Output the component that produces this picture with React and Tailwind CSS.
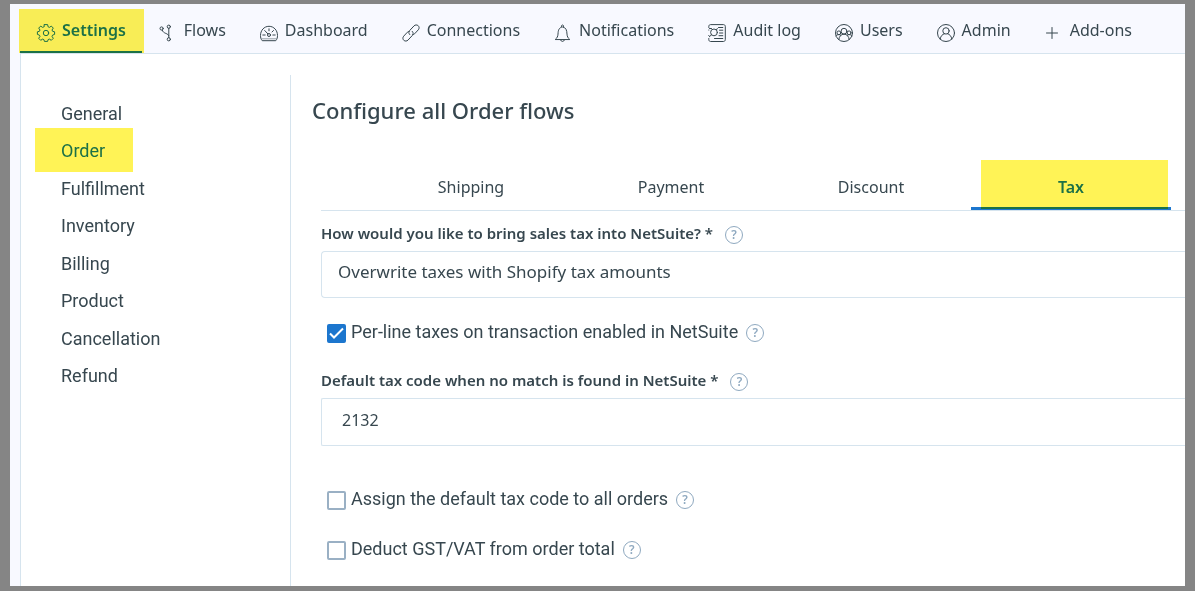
import { useState } from "react";

const Icon = ({ children }) => (
    <svg
        viewBox="0 0 18 18"
        className="w-[18px] h-[18px] shrink-0 overflow-visible"
        fill="none"
        stroke="currentColor"
        strokeWidth="1"
        strokeLinecap="round"
        strokeLinejoin="round"
        aria-hidden="true"
    >
        {children}
    </svg>
);

const GearIcon = () => (
    <Icon>
        <circle cx="9" cy="9" r="2.7" />
        <path d="M7.4 0.6h3.2l.5 2.2 1.3.6 1.9-1.3 2 2-1.3 1.9.6 1.3 2 .5v2.6l-2 .7-.6 1.3 1.3 1.9-2 2-1.9-1.2-1.3.5-.5 1.8H7.4l-.5-1.8-1.3-.5-1.9 1.2-2-2L3 12.4l-.6-1.3-2-.7V7.8l2-.5L3 6 1.7 4.1l2-2 1.9 1.3 1.3-.6z" />
    </Icon>
);

const FlowsIcon = () => (
    <Icon>
        <circle cx="2.6" cy="4.5" r="1.6" />
        <circle cx="9.8" cy="2.7" r="1.6" />
        <circle cx="9.8" cy="15.3" r="1.6" />
        <path d="M9.8 4.3v9.4M3.200 6.100c.6 2 2 2.600 3.600 3.300 1.500.6 2.600 1.200 3 2.300" />
    </Icon>
);

const DashboardIcon = () => (
    <Icon>
        <path d="M2 16.4C.8 15 .5 13.500.5 11.500.5 6.500 4 2.300 9 2.300s8.500 4.200 8.500 9.200c0 2-.3 3.500-1.500 4.900z" />
        <circle cx="9" cy="11" r="1.5" />
        <path d="M9 4.8v2M2.8 11h2.400M12.800 11h2.400M4.700 6.500l3.200 3.400M12 8l1.500-1.500" />
        <path d="M2 14.8h14" strokeWidth=".5" />
    </Icon>
);

const LinkIcon = () => (
    <Icon>
        <path d="M7.7 10.6c-1.200-1.200-1.200-2.900 0-4.100l4.300-4.600c1.200-1.200 2.900-1.300 4.200-.2 1.200 1.200 1.200 2.900.1 4.100l-3.700 4c-.6.6-1.200.9-2 .9" />
        <path d="M10.3 7.4c1.200 1.200 1.200 2.900 0 4.100L6 16.100c-1.200 1.200-2.900 1.300-4.200.2-1.200-1.200-1.200-2.900-.1-4.100l3.700-4c.6-.6 1.200-.9 2-.9" />
    </Icon>
);

const BellIcon = () => (
    <Icon>
        <path d="M1.5 15.3c1.700-1.500 2.300-2.700 2.500-5.200.2-4 1-6.600 4.500-7.100 3.500.5 4.300 3.100 4.500 7.100.2 2.500.8 3.700 2.500 5.200z" />
        <path d="M7.4 2.6c-.2-2.400 2.400-2.400 2.200 0M6.700 16.300c.5 1.600 3.100 1.600 3.600 0" />
    </Icon>
);

const AuditIcon = () => (
    <Icon>
        <path d="M.8 3.5V2.400C.8 1.300 1.500.6 2.600.6h12.800c1.100 0 1.900.7 1.900 1.800v13.200c0 1.100-.8 1.900-1.900 1.900H2.600c-1.100 0-1.800-.8-1.800-1.900v-1.100M.8 6v.1M.8 11.400v.1" />
        <circle cx="6" cy="8.4" r="3.4" />
        <path d="M3.5 10.8l-2.200 2M10.500 3.500h4.300M11.500 6.200h3.300M11.500 9h3.300M11 11.700h3.800M6.500 14.500h8.300M1.500 4.500h2M8.500 5.800l.8-1.300" />
    </Icon>
);

const UsersIcon = () => (
    <Icon>
        <circle cx="9" cy="9" r="8.5" />
        <circle cx="9" cy="7.2" r="2.9" />
        <circle cx="3.9" cy="8.8" r="1.9" />
        <circle cx="14.1" cy="8.8" r="1.9" />
        <path d="M3.8 15.500c.4-3.300 2.400-5.300 5.200-5.300s4.800 2 5.200 5.300M1 11.800c.8-.8 1.700-1.200 2.900-1.200.8 0 1.400.2 1.900.7M17 11.800c-.8-.8-1.700-1.200-2.900-1.200-.8 0-1.400.2-1.900.7" />
    </Icon>
);

const AdminIcon = () => (
    <Icon>
        <circle cx="9" cy="9" r="8.5" />
        <circle cx="9" cy="6.9" r="3.2" />
        <path d="M3.200 15.100c.4-3.200 2.200-4.800 4.200-5.300M14.800 15.100c-.4-3.200-2.200-4.800-4.200-5.300" />
    </Icon>
);

const PlusIcon = () => (
    <Icon>
        <path d="M7 3.500v11M1.500 9h11" />
    </Icon>
);

const navItems = [
    { name: "Settings", icon: GearIcon },
    { name: "Flows", icon: FlowsIcon },
    { name: "Dashboard", icon: DashboardIcon },
    { name: "Connections", icon: LinkIcon },
    { name: "Notifications", icon: BellIcon },
    { name: "Audit log", icon: AuditIcon },
    { name: "Users", icon: UsersIcon },
    { name: "Admin", icon: AdminIcon },
    { name: "Add-ons", icon: PlusIcon },
];

const sections = ["General", "Order", "Fulfillment", "Inventory", "Billing", "Product", "Cancellation", "Refund"];

const tabs = ["Shipping", "Payment", "Discount", "Tax"];

const Help = () => (
    <button
        type="button"
        aria-label="Help"
        className="w-[18px] h-[18px] shrink-0 rounded-full border border-[#8fa9c0] text-[#8fa9c0] text-xs leading-4 font-semibold cursor-pointer"
    >
        ?
    </button>
);

const CheckField = ({ id, label, checked, onChange }) => (
    <div className="flex items-center h-6 pl-[6px]">
        <span className="relative w-[19px] h-[19px] shrink-0">
            <input
                type="checkbox"
                id={id}
                checked={checked}
                onChange={onChange}
                className="block w-full h-full appearance-none rounded-xs border-2 border-[#9ab0c4] bg-white checked:bg-[#1c76ce] checked:border-[#1c76ce]"
            />
            {checked && (
                <svg viewBox="0 0 19 19" className="absolute inset-0 pointer-events-none" fill="none" stroke="white" strokeWidth="2">
                    <path d="M3 9.5l4 4L16 4.500" />
                </svg>
            )}
        </span>
        <label htmlFor={id} className="font-[Roboto,sans-serif] text-lg leading-6 ml-[5px] mr-2 pb-[3px]">
            {label}
        </label>
        <Help />
    </div>
);

const App = () => {
    const [checks, setChecks] = useState({ perLine: true, assign: false, deduct: false });

    const handleCheck = (e) => {
        setChecks({ ...checks, [e.target.id]: e.target.checked });
    };

    return (
        <div className="min-h-screen flex bg-[#858585] px-[10px] pt-1 pb-[5px] font-['Noto_Sans',sans-serif] text-base text-[#37474f]">
            <div className="flex-1 min-w-0 flex flex-col bg-[#f8f9ff] pl-[10px] overflow-hidden">
                <nav className="flex h-[49px]">
                    {navItems.map(({ name, icon: NavIcon }, i) => (
                        <a
                            key={name}
                            href="#"
                            className={
                                i === 0
                                    ? "relative flex items-center pl-[17px] pr-4 gap-[7px] font-semibold text-[#1c76ce] border-b-2 border-[#1c76ce]"
                                    : "flex items-center px-[17px] gap-[7px] border-b-2 border-transparent"
                            }
                        >
                            <span className="pt-[10px]">
                                <NavIcon />
                            </span>
                            <span className="pt-1 whitespace-nowrap">{name}</span>
                            {i === 0 && (
                                <span className="absolute -left-px -right-[2px] top-[5px] -bottom-[2px] bg-[#fff356] mix-blend-multiply" />
                            )}
                        </a>
                    ))}
                </nav>
                <div className="flex-1 flex bg-white border-t border-l border-[#d6e4ee]">
                    <aside className="w-[269px] shrink-0 pt-[41px] pl-10">
                        <ul className="grid grid-rows-8 h-[300px] font-[Roboto,sans-serif] text-lg">
                            {sections.map((section) => (
                                <li key={section} className="flex items-center">
                                    {section === "Order" ? (
                                        <a href="#" className="relative text-[#1c76ce]">
                                            {section}
                                            <span className="absolute -left-[26px] -right-7 -top-[9px] -bottom-[7px] bg-[#fff356] mix-blend-multiply" />
                                        </a>
                                    ) : (
                                        <a href="#">{section}</a>
                                    )}
                                </li>
                            ))}
                        </ul>
                    </aside>
                    <main className="flex-1 min-w-0 mt-[21px] border-l border-[#d6e4ee] pl-[21px]">
                        <h1 className="text-[22px] leading-8 font-medium mt-[19px]">Configure all Order flows</h1>
                        <div className="pl-[9px]">
                            <div role="tablist" className="flex h-[51px] mt-[34px] pl-[50px] border-b border-[#d6e4ee]">
                                {tabs.map((tab) => (
                                    <button
                                        key={tab}
                                        role="tab"
                                        type="button"
                                        aria-selected={tab === "Tax"}
                                        className={
                                            tab === "Tax"
                                                ? "relative w-[200px] shrink-0 pt-[6px] font-semibold text-[#1c76ce] border-b-3 border-[#1c76ce]"
                                                : "w-[200px] shrink-0 pt-[6px] border-b-3 border-transparent"
                                        }
                                    >
                                        {tab}
                                        {tab === "Tax" && (
                                            <span className="absolute left-[10px] right-[3px] top-0 -bottom-[2px] bg-[#fff356] mix-blend-multiply" />
                                        )}
                                    </button>
                                ))}
                            </div>
                            <div className="flex items-center h-6 mt-3 mb-1 gap-3">
                                <label htmlFor="salesTax" className="text-[15px] font-semibold pb-[3px]">
                                    How would you like to bring sales tax into NetSuite? *
                                </label>
                                <Help />
                            </div>
                            <select
                                id="salesTax"
                                className="block appearance-none w-full h-[47px] rounded-l border border-r-0 border-[#d6e4ee] pl-4 pb-[6px] bg-white text-[17px]"
                            >
                                <option>Overwrite taxes with Shopify tax amounts</option>
                            </select>
                            <div className="mt-[23px]">
                                <CheckField
                                    id="perLine"
                                    label="Per-line taxes on transaction enabled in NetSuite"
                                    checked={checks.perLine}
                                    onChange={handleCheck}
                                />
                            </div>
                            <div className="flex items-center h-6 mt-[25px] mb-1 gap-3">
                                <label htmlFor="taxCode" className="text-[15px] font-semibold pb-[3px]">
                                    Default tax code when no match is found in NetSuite *
                                </label>
                                <Help />
                            </div>
                            <input
                                id="taxCode"
                                type="text"
                                defaultValue="2132"
                                className="block w-full h-12 rounded-l-xs border border-r-0 border-[#d6e4ee] pl-5 pb-1 bg-white"
                            />
                            <div className="mt-[42px] flex flex-col gap-[26px]">
                                <CheckField
                                    id="assign"
                                    label="Assign the default tax code to all orders"
                                    checked={checks.assign}
                                    onChange={handleCheck}
                                />
                                <CheckField
                                    id="deduct"
                                    label="Deduct GST/VAT from order total"
                                    checked={checks.deduct}
                                    onChange={handleCheck}
                                />
                            </div>
                        </div>
                    </main>
                </div>
            </div>
        </div>
    );
};

export default App;
